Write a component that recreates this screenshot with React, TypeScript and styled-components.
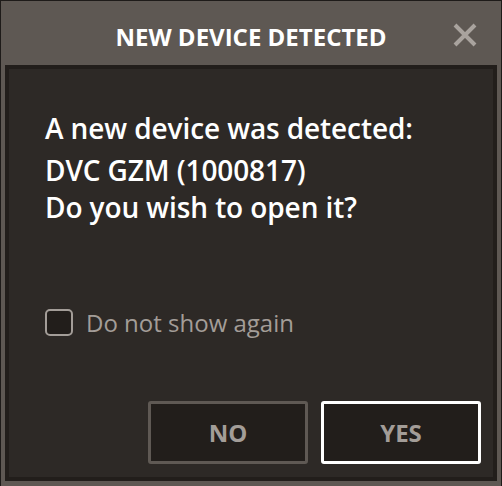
import React from "react";
import styled, { createGlobalStyle } from "styled-components";

const Global = createGlobalStyle`
  html, body { margin: 0; padding: 0; background: #5e5853; }
  * { box-sizing: border-box; }
`;

const Frame = styled.div`
  width: 502px;
  height: 486px;
  background: #5e5853;
  border: 1px solid #1e1b19;
  border-bottom: none;
  display: flex;
  flex-direction: column;
  font-family: "Open Sans", "Noto Sans", sans-serif;
`;

const Header = styled.div`
  height: 64px;
  flex: none;
  position: relative;
  display: flex;
  align-items: center;
  justify-content: center;
`;

const Title = styled.h1`
  margin: 0;
  color: #ffffff;
  font-size: 24px;
  font-weight: 700;
  letter-spacing: 0px;
  padding-top: 6px;
`;

const Close = styled.button`
  position: absolute;
  right: 24px;
  top: 22px;
  width: 24px;
  height: 24px;
  padding: 0;
  border: none;
  background: transparent;
  display: flex;
`;

const Panel = styled.div`
  flex: 1;
  margin: 0 4px 5px 4px;
  background: #2d2926;
  border: 4px solid #221e1b;
  display: flex;
  flex-direction: column;
  padding: 41px 12px 13px 36px;
`;

const Message = styled.div`
  color: #ffffff;
  font-size: 28px;
  font-weight: 600;
  line-height: 37.5px;
  letter-spacing: -0.1px;
`;

const Line = styled.p<{ $gapAfter?: number }>`
  margin: 0 0 ${(p) => p.$gapAfter ?? 0}px 0;
`;

const CheckRow = styled.label`
  margin-top: 82px;
  display: flex;
  align-items: center;
  gap: 13px;
  color: #a39d98;
  font-size: 24px;
  line-height: 27px;
  font-weight: 400;
`;

const Box = styled.span`
  width: 28px;
  height: 27px;
  border: 2.5px solid #a39d98;
  border-radius: 5px;
  background: #221e1b;
  flex: none;
`;

const Buttons = styled.div`
  margin-top: auto;
  display: flex;
  justify-content: flex-end;
  gap: 13px;
`;

const Button = styled.button<{ $primary?: boolean }>`
  width: 160px;
  height: 63px;
  background: #221e1b;
  border: 3px solid ${(p) => (p.$primary ? "#ffffff" : "#5f5954")};
  border-radius: 3px;
  color: #a39d98;
  font-family: "Open Sans", "Noto Sans", sans-serif;
  font-size: 24px;
  font-weight: 700;
  padding: 0;
`;

export default function App() {
  return (
    <>
      <Global />
      <Frame>
        <Header>
          <Title>NEW DEVICE DETECTED</Title>
          <Close aria-label="Close">
            <svg width="24" height="24" viewBox="0 0 24 24">
              <path d="M2 2 L22 22 M22 2 L2 22" stroke="#a9a39e" strokeWidth="4" />
            </svg>
          </Close>
        </Header>
        <Panel>
          <Message>
            <Line $gapAfter={4}>A new device was detected:</Line>
            <Line>DVC GZM (1000817)</Line>
            <Line>Do you wish to open it?</Line>
          </Message>
          <CheckRow>
            <Box />
            Do not show again
          </CheckRow>
          <Buttons>
            <Button>NO</Button>
            <Button $primary>YES</Button>
          </Buttons>
        </Panel>
      </Frame>
    </>
  );
}
